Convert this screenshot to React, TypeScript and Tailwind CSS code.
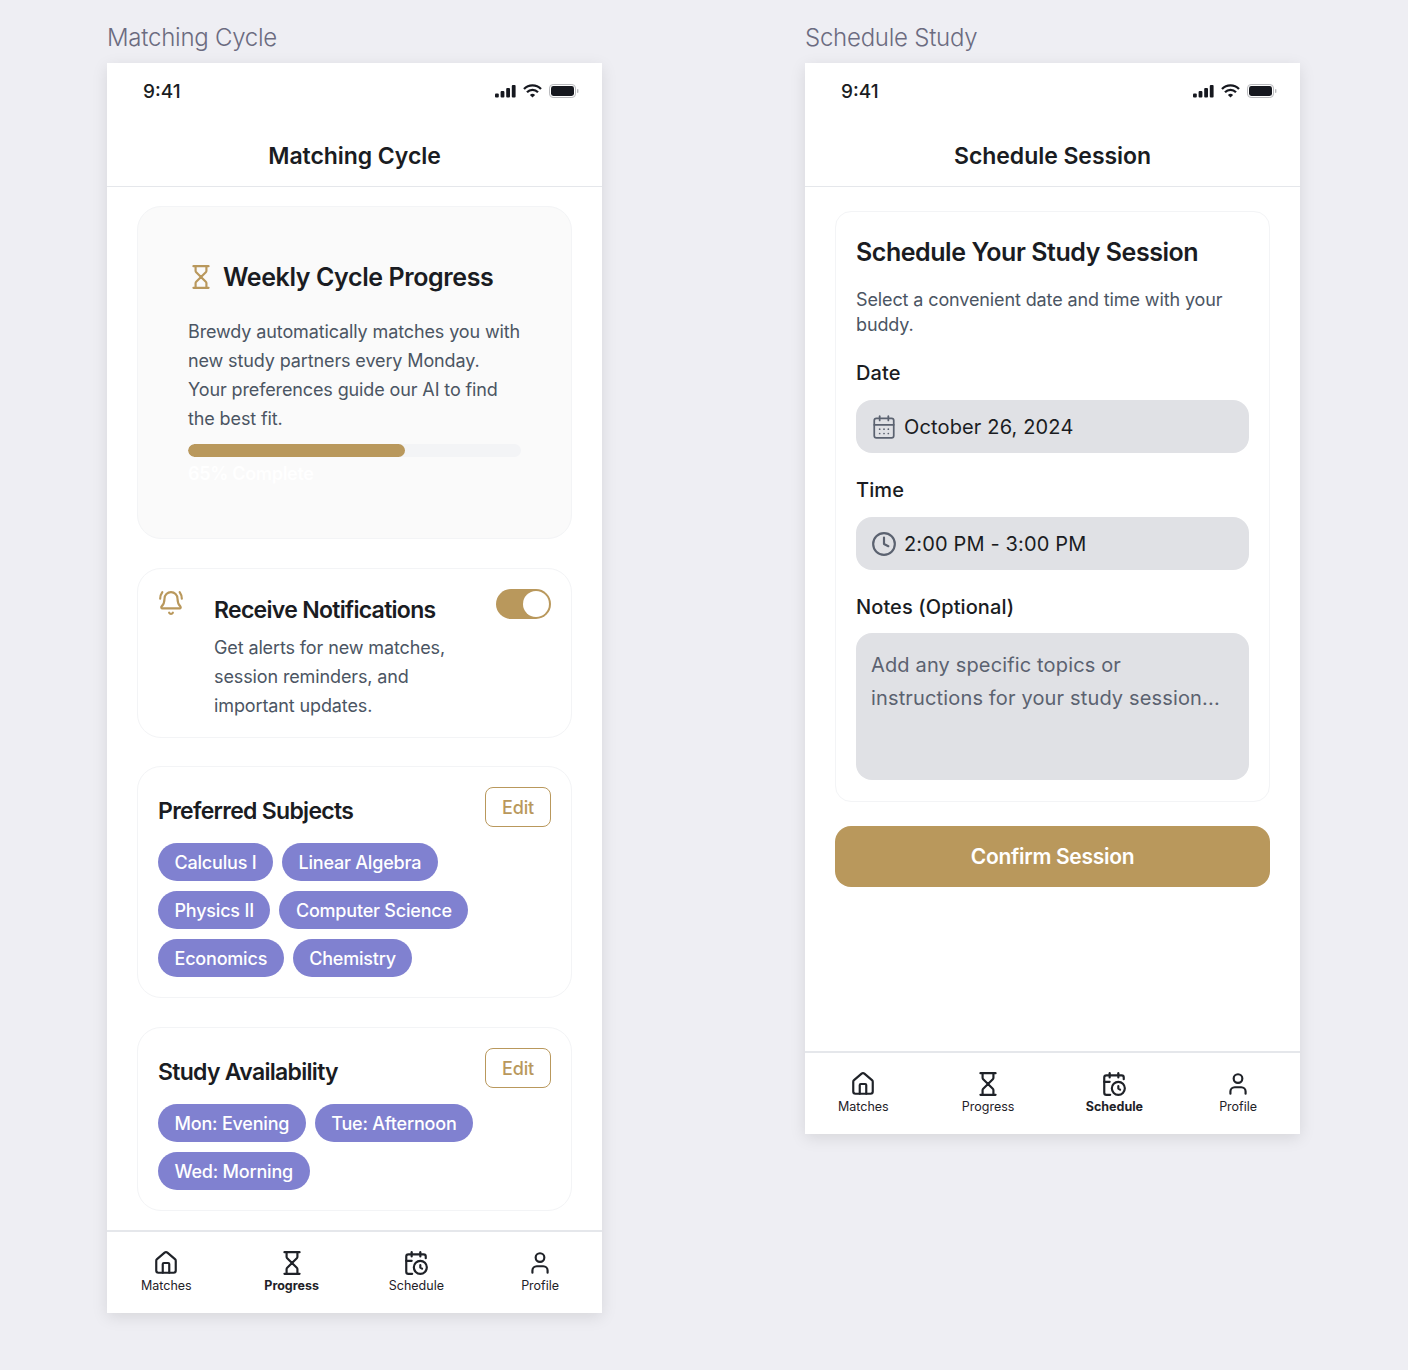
import { BellRing, CalendarClock, CalendarDays, Clock, Hourglass, House, User } from "lucide-react";

const gold = "#b9985c";

function StatusBar() {
  return (
    <div className="flex h-[56px] items-center justify-between pl-[36px] pr-[23px]">
      <span className="text-[19px] font-medium leading-none text-[#1a1c22]">9:41</span>
      <div className="flex items-center gap-[7px]">
        <svg width="21" height="14" viewBox="0 0 21 14" fill="#16181f">
          <rect x="0" y="9.5" width="3.8" height="4" rx="1" />
          <rect x="5.6" y="7" width="3.8" height="6.5" rx="1" />
          <rect x="11.2" y="4" width="3.8" height="9.5" rx="1" />
          <rect x="16.8" y="1" width="3.8" height="12.5" rx="1" />
        </svg>
        <svg width="19" height="14" viewBox="0 0 19 14" fill="none" stroke="#16181f" strokeWidth="2.3">
          <path d="M1 5a12 12 0 0 1 17 0" />
          <path d="M4 8.2a7.8 7.8 0 0 1 11 0" />
          <path d="M9.5 13.6 6.9 11a3.7 3.7 0 0 1 5.2 0Z" fill="#16181f" stroke="none" />
        </svg>
        <svg width="30" height="14" viewBox="0 0 30 14">
          <rect x="0.5" y="0.5" width="26" height="13" rx="3.6" fill="none" stroke="#b9babd" />
          <rect x="2" y="2" width="23" height="10" rx="2.4" fill="#16181f" />
          <rect x="28" y="5" width="1.4" height="4" rx="0.7" fill="#b9babd" />
        </svg>
      </div>
    </div>
  );
}

function Header({ title }: { title: string }) {
  return (
    <div className="flex h-[68px] items-start justify-center border-b border-[#e5e7eb] pt-[21px]">
      <h1 className="text-[23px] font-semibold leading-[32px] tracking-[-0.05px] text-[#1a1c22]">{title}</h1>
    </div>
  );
}

function Nav({ active }: { active: string }) {
  const first = active === "Progress";
  const items = [
    { label: "Matches", Icon: House, cls: first ? "pr-[5px]" : "pr-[7px]" },
    { label: "Progress", Icon: Hourglass, cls: first ? "pr-[2px]" : "pr-[5px]" },
    { label: "Schedule", Icon: CalendarClock, cls: "" },
    { label: "Profile", Icon: User, cls: "" },
  ];
  return (
    <nav className="grid h-[83px] grid-cols-4 items-start border-t-2 border-[#e5e7eb] bg-white pt-[18px]">
      {items.map(({ label, Icon, cls }) => (
        <div key={label} className={`flex flex-col items-center text-[#1f2228] ${cls}`}>
          <Icon size={26} strokeWidth={2} />
          <span className={`mt-[1px] text-[12.5px] leading-[18px] ${label === active ? "font-bold" : "font-normal"}`}>{label}</span>
        </div>
      ))}
    </nav>
  );
}

function Chip({ children }: { children: string }) {
  return (
    <span className="flex h-[38px] items-center rounded-full bg-[#8081d0] px-[16.5px] text-[18px] font-medium tracking-[-0.2px] text-white">
      {children}
    </span>
  );
}

function ChipCard({ title, chips, height, cls }: { title: string; chips: string[][]; height: string; cls?: string }) {
  return (
    <section className={`rounded-[24px] border border-[#f3f4f6] bg-white px-[20px] pt-[20px] ${height} ${cls ?? ""}`}>
      <div className="flex h-[40px] items-start justify-between">
        <h3 className="mt-[8px] text-[23px] font-semibold leading-[32px] tracking-[-0.7px] text-[#1a1c22]">{title}</h3>
        <button className="h-[40px] w-[66px] rounded-[8px] border border-[#b9985c] text-[18px] font-medium tracking-[-0.2px] text-[#b9985c]">Edit</button>
      </div>
      <div className="mt-[16px] flex flex-col gap-[10px]">
        {chips.map((row) => (
          <div key={row[0]} className="flex gap-[9px]">
            {row.map((c) => (
              <Chip key={c}>{c}</Chip>
            ))}
          </div>
        ))}
      </div>
    </section>
  );
}

function Field({ label, icon, value }: { label: string; icon: React.ReactNode; value: string }) {
  return (
    <div>
      <div className="text-[20px] font-medium leading-[28px] tracking-[0.1px] text-[#1a1c22]">{label}</div>
      <div className="mt-[13px] flex h-[53px] items-center gap-[7px] rounded-[16px] bg-[#e0e1e5] pl-[15px] text-[20px] tracking-[0.15px] text-[#1a1c22]">
        {icon}
        {value}
      </div>
    </div>
  );
}

export default function App() {
  return (
    <div className="flex h-[1370px] gap-[203px] bg-[#eeeef3] pl-[107px] font-['Inter','Liberation_Sans',sans-serif]">
      <div className="w-[495px]">
        <div className="flex h-[63px] items-end pb-[9px] text-[24px] font-light leading-[32px] tracking-[-0.25px] text-[#6b6b80]">Matching Cycle</div>
        <div className="flex h-[1250px] flex-col bg-white shadow-[0_4px_15px_rgba(0,0,0,0.1)]">
          <StatusBar />
          <Header title="Matching Cycle" />
          <div className="flex flex-1 flex-col gap-[28px] px-[30px] pt-[19px]">
            <section className="h-[333px] rounded-[24px] border border-[#f3f4f6] bg-[#fafafa] px-[50px] pt-[50px]">
              <div className="flex items-center gap-[9px]">
                <Hourglass size={26} strokeWidth={2} color={gold} className="mb-[1px]" />
                <h2 className="text-[25px] font-semibold leading-[40px] tracking-[-0.4px] text-[#1a1c22]">Weekly Cycle Progress</h2>
              </div>
              <p className="mt-[20px] text-[18px] leading-[29px] tracking-[-0.12px] text-[#4b5563]">
                Brewdy automatically matches you with
                <br />
                new study partners every Monday.
                <br />
                Your preferences guide our AI to find
                <br />
                the best fit.
              </p>
              <div className="mt-[11px] h-[13px] w-full overflow-hidden rounded-full bg-[#f3f4f6]">
                <div className="h-full w-[217px] rounded-full bg-[#b9985c]" />
              </div>
              <div className="mt-[3px] text-[18px] font-semibold leading-[28px] tracking-[-0.3px] text-white">65% Complete</div>
            </section>
            <section className="mt-[1px] flex h-[170px] rounded-[24px] border border-[#f3f4f6] bg-white px-[20px] pt-[20px]">
              <BellRing size={26} strokeWidth={2} color={gold} className="mt-[1px] shrink-0" />
              <div className="ml-[30px] w-[260px] pt-[5px]">
                <h3 className="text-[23px] font-semibold leading-[32px] tracking-[-0.7px] text-[#1a1c22]">Receive Notifications</h3>
                <p className="mt-[7px] text-[18px] leading-[29px] tracking-[-0.12px] text-[#4b5563]">Get alerts for new matches, session reminders, and important updates.</p>
              </div>
              <div className="ml-auto flex h-[30px] w-[55px] shrink-0 items-center justify-end rounded-full bg-[#b9985c] pr-[2px]">
                <div className="h-[26px] w-[26px] rounded-full bg-white" />
              </div>
            </section>
            <ChipCard title="Preferred Subjects" height="h-[232px]" chips={[["Calculus I", "Linear Algebra"], ["Physics II", "Computer Science"], ["Economics", "Chemistry"]]} />
            <ChipCard title="Study Availability" height="h-[184px]" cls="mt-[1px]" chips={[["Mon: Evening", "Tue: Afternoon"], ["Wed: Morning"]]} />
          </div>
          <Nav active="Progress" />
        </div>
      </div>

      <div className="w-[495px]">
        <div className="flex h-[63px] items-end pb-[9px] text-[24px] font-light leading-[32px] tracking-[-0.25px] text-[#6b6b80]">Schedule Study</div>
        <div className="flex h-[1071px] flex-col bg-white shadow-[0_4px_15px_rgba(0,0,0,0.1)]">
          <StatusBar />
          <Header title="Schedule Session" />
          <div className="flex flex-1 flex-col px-[30px] pt-[24px]">
            <section className="h-[591px] rounded-[16px] border border-[#f3f4f6] bg-white px-[20px] pt-[20px]">
              <h2 className="text-[25px] font-semibold leading-[40px] tracking-[-0.45px] text-[#1a1c22]">Schedule Your Study Session</h2>
              <p className="mt-[15px] text-[18px] leading-[25px] tracking-[-0.12px] text-[#4b5563]">Select a convenient date and time with your buddy.</p>
              <div className="mt-[22px]">
                <Field label="Date" value="October 26, 2024" icon={<CalendarDays size={26} strokeWidth={1.6} color="#5b6270" />} />
              </div>
              <div className="mt-[23px]">
                <Field label="Time" value="2:00 PM - 3:00 PM" icon={<Clock size={26} strokeWidth={2} color="#5b6270" />} />
              </div>
              <div className="mt-[23px]">
                <div className="text-[20px] font-medium leading-[28px] tracking-[0.1px] text-[#1a1c22]">Notes (Optional)</div>
                <div className="mt-[12px] h-[147px] rounded-[16px] bg-[#e0e1e5] pl-[15px] pr-[25px] pt-[16px] text-[20px] leading-[33px] tracking-[0.15px] text-[#5b6270]">
                  Add any specific topics or instructions for your study session...
                </div>
              </div>
            </section>
            <button className="mt-[24px] h-[61px] rounded-[16px] bg-[#b9985c] text-[21px] font-semibold tracking-[-0.3px] text-white">Confirm Session</button>
          </div>
          <Nav active="Schedule" />
        </div>
      </div>
    </div>
  );
}
